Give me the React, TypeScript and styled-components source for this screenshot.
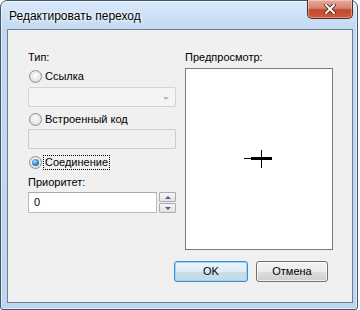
import React from 'react';
import styled, { createGlobalStyle } from 'styled-components';

const Global = createGlobalStyle`
  html, body { margin: 0; padding: 0; background: #ffffff; }
  body { font-family: "Liberation Sans", Arial, sans-serif; font-size: 11px; color: #000; }
  * { box-sizing: border-box; }
`;

const Window = styled.div`
  width: 358px;
  height: 310px;
  border: 1px solid #44566a;
  border-radius: 7px 7px 3px 3px;
  background: linear-gradient(to bottom, #d9e9f9 0px, #c2d9f1 28px, #bdd5ee 100%);
  box-shadow: inset 0 0 0 1px rgba(255, 255, 255, 0.55);
  display: flex;
  flex-direction: column;
`;

const TitleBar = styled.div`
  height: 28px;
  display: flex;
  align-items: flex-start;
  justify-content: space-between;
  padding-left: 8px;
  padding-right: 4px;
`;

const Title = styled.div`
  margin-top: 8px;
  font-size: 12px;
  line-height: 15px;
  color: #000;
  text-shadow: 0 0 6px #ffffff, 0 0 3px #ffffff;
`;

const CloseButton = styled.div`
  width: 46px;
  height: 19px;
  margin-top: -1px;
  border: 1px solid #5b2a22;
  border-top: none;
  border-radius: 0 0 5px 5px;
  background: linear-gradient(to bottom, #e9a99a 0%, #d7826e 45%, #c24a30 55%, #cf5a3c 100%);
  box-shadow: inset 0 0 0 1px rgba(255, 255, 255, 0.35);
  display: flex;
  align-items: center;
  justify-content: center;
`;

const Client = styled.div`
  margin: 0 4px 0 6px;
  height: 274px;
  border: 1px solid #6f7f91;
  background: #f0f0f0;
  padding: 20px 19px 0 20px;
  display: flex;
  flex-direction: column;
`;

const Columns = styled.div`
  display: grid;
  grid-template-columns: 148px 148px;
  column-gap: 9px;
`;

const Column = styled.div`
  display: flex;
  flex-direction: column;
`;

const Label = styled.div<{ $mt?: number }>`
  margin-top: ${(p) => p.$mt ?? 0}px;
  height: 15px;
  line-height: 15px;
  white-space: nowrap;
`;

const RadioRow = styled.div<{ $mt: number }>`
  margin-top: ${(p) => p.$mt}px;
  height: 15px;
  display: flex;
  align-items: center;
  gap: 2px;
  padding-left: 1px;
`;

const RadioCircle = styled.span<{ $checked?: boolean }>`
  width: 13px;
  height: 13px;
  border-radius: 50%;
  border: 1px solid #8e8f8f;
  background: radial-gradient(circle at 50% 40%, #fdfdfd 0%, #e6e6e6 60%, #cfcfcf 100%);
  display: flex;
  align-items: center;
  justify-content: center;
  &::after {
    content: '';
    display: ${(p) => (p.$checked ? 'block' : 'none')};
    width: 7px;
    height: 7px;
    border-radius: 50%;
    background: radial-gradient(circle at 40% 35%, #b7e0fb 0%, #3f8fd0 45%, #1c4f82 100%);
  }
`;

const RadioText = styled.span<{ $focused?: boolean }>`
  line-height: 13px;
  padding: 0 1px;
  outline: ${(p) => (p.$focused ? '1px dotted #000' : 'none')};
  white-space: nowrap;
`;

const Combo = styled.div<{ $mt: number }>`
  margin-top: ${(p) => p.$mt}px;
  height: 20px;
  border: 1px solid #d3d3d3;
  border-radius: 2px;
  background: #f4f4f4;
  display: flex;
  align-items: center;
  justify-content: flex-end;
  padding-right: 6px;
`;

const ComboArrow = styled.span`
  width: 0;
  height: 0;
  border-left: 3px solid transparent;
  border-right: 3px solid transparent;
  border-top: 3px solid #b5b5b5;
  margin-top: 2px;
`;

const DisabledText = styled.div<{ $mt: number }>`
  margin-top: ${(p) => p.$mt}px;
  height: 20px;
  border: 1px solid #cdcdcd;
  border-radius: 1px;
  background: #f0f0f0;
`;

const SpinRow = styled.div<{ $mt: number }>`
  margin-top: ${(p) => p.$mt}px;
  height: 21px;
  display: flex;
  gap: 2px;
`;

const NumberInput = styled.div`
  width: 129px;
  height: 21px;
  border: 1px solid #b7bcc4;
  border-top-color: #a6abb3;
  background: #fff;
  padding-left: 5px;
  line-height: 19px;
`;

const Spinner = styled.div`
  width: 17px;
  display: flex;
  flex-direction: column;
  justify-content: space-between;
`;

const SpinButton = styled.div`
  height: 10px;
  border: 1px solid #acacac;
  border-radius: 1px;
  background: linear-gradient(to bottom, #f6f6f6, #e2e2e2);
  display: flex;
  align-items: center;
  justify-content: center;
`;

const Arrow = styled.span<{ $dir: 'up' | 'down' }>`
  width: 0;
  height: 0;
  border-left: 3px solid transparent;
  border-right: 3px solid transparent;
  ${(p) =>
    p.$dir === 'up' ? 'border-bottom: 3px solid #4e5a9c;' : 'border-top: 3px solid #4e5a9c;'}
`;

const Preview = styled.div`
  margin-top: 3px;
  height: 182px;
  border: 1px solid #7a7a7a;
  background: #ffffff;
  display: flex;
  align-items: center;
  justify-content: center;
`;

const ButtonRow = styled.div`
  margin-top: 11px;
  margin-right: 5px;
  display: flex;
  justify-content: flex-end;
  gap: 8px;
`;

const Button = styled.div<{ $default?: boolean }>`
  width: ${(p) => (p.$default ? 74 : 72)}px;
  height: 21px;
  border: 1px solid ${(p) => (p.$default ? '#3c8bd0' : '#707070')};
  border-radius: 3px;
  background: ${(p) =>
    p.$default
      ? 'linear-gradient(to bottom, #eaf4fb 0%, #dfecf5 50%, #c9dde9 51%, #c4d9e6 100%)'
      : 'linear-gradient(to bottom, #f2f2f2 0%, #ebebeb 50%, #dddddd 51%, #cfcfcf 100%)'};
  box-shadow: inset 0 0 0 1px ${(p) => (p.$default ? '#9ed6f7' : 'rgba(255,255,255,0.7)')};
  display: flex;
  align-items: center;
  justify-content: center;
  line-height: 15px;
`;

export default function App() {
  return (
    <>
      <Global />
      <Window>
        <TitleBar>
          <Title>Редактировать переход</Title>
          <CloseButton>
            <svg width="12" height="10" viewBox="0 0 12 10">
              <path d="M2 1 L10 9 M10 1 L2 9" stroke="#4a1f18" strokeWidth="3.6" strokeLinecap="square" />
              <path d="M2 1 L10 9 M10 1 L2 9" stroke="#ffffff" strokeWidth="2" strokeLinecap="square" />
            </svg>
          </CloseButton>
        </TitleBar>
        <Client>
          <Columns>
            <Column>
              <Label>Тип:</Label>
              <RadioRow $mt={4}>
                <RadioCircle />
                <RadioText>Ссылка</RadioText>
              </RadioRow>
              <Combo $mt={3}>
                <ComboArrow />
              </Combo>
              <RadioRow $mt={5}>
                <RadioCircle />
                <RadioText>Встроенный код</RadioText>
              </RadioRow>
              <DisabledText $mt={2} />
              <RadioRow $mt={6}>
                <RadioCircle $checked />
                <RadioText $focused>Соединение</RadioText>
              </RadioRow>
              <Label $mt={5}>Приоритет:</Label>
              <SpinRow $mt={2}>
                <NumberInput>0</NumberInput>
                <Spinner>
                  <SpinButton>
                    <Arrow $dir="up" />
                  </SpinButton>
                  <SpinButton>
                    <Arrow $dir="down" />
                  </SpinButton>
                </Spinner>
              </SpinRow>
            </Column>
            <Column>
              <Label>Предпросмотр:</Label>
              <Preview>
                <svg width="30" height="20" viewBox="0 0 30 20">
                  <path d="M0 9.5 H28" stroke="#000" strokeWidth="1" />
                  <path d="M7 9.5 H28" stroke="#000" strokeWidth="3" />
                  <path d="M17.5 1 V19" stroke="#000" strokeWidth="1" />
                </svg>
              </Preview>
            </Column>
          </Columns>
          <ButtonRow>
            <Button $default>OK</Button>
            <Button>Отмена</Button>
          </ButtonRow>
        </Client>
      </Window>
    </>
  );
}
